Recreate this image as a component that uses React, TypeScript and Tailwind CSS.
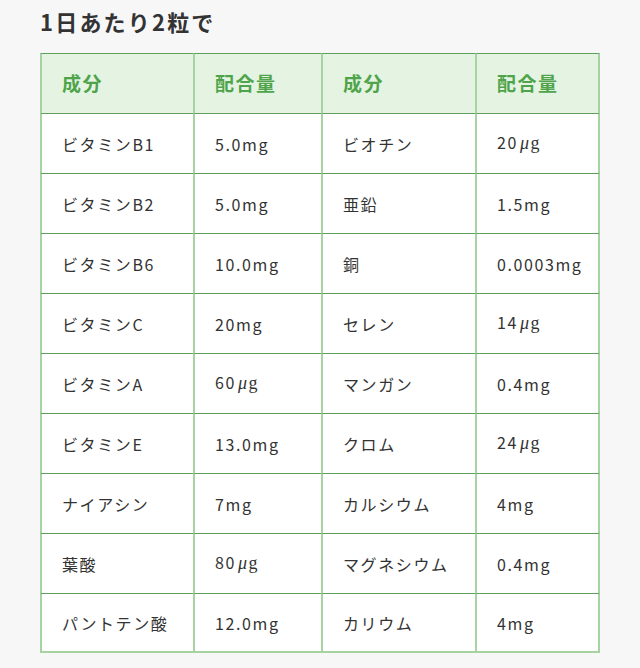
const rows: [string, string, string, string][] = [
  ['ビタミンB1', '5.0mg', 'ビオチン', '20μg'],
  ['ビタミンB2', '5.0mg', '亜鉛', '1.5mg'],
  ['ビタミンB6', '10.0mg', '銅', '0.0003mg'],
  ['ビタミンC', '20mg', 'セレン', '14μg'],
  ['ビタミンA', '60μg', 'マンガン', '0.4mg'],
  ['ビタミンE', '13.0mg', 'クロム', '24μg'],
  ['ナイアシン', '7mg', 'カルシウム', '4mg'],
  ['葉酸', '80μg', 'マグネシウム', '0.4mg'],
  ['パントテン酸', '12.0mg', 'カリウム', '4mg'],
];

const headers = ['成分', '配合量', '成分', '配合量'];

// μg is drawn with the slanted μ and serif g seen in the screenshot
function Amount({ value }: { value: string }) {
  if (!value.endsWith('μg')) return <>{value}</>;
  return (
    <>
      {value.slice(0, -2)}
      <span className="ml-[2px] font-['Liberation_Serif',serif] text-[18px] tracking-[0.08em]">
        <i>μ</i>g
      </span>
    </>
  );
}

export default function App() {
  return (
    <div
      className="min-h-[668px] w-[640px] bg-[#f7f7f7] px-10 pt-[5px] text-[#333]"
      style={{ fontFamily: '"Noto Sans CJK JP", "Noto Sans", sans-serif' }}
    >
      <h2 className="h-[48px] text-[22px] font-bold leading-[32px] tracking-[0.1em]">
        1日あたり2粒で
      </h2>

      <table className="w-[560px] table-fixed border-separate border-spacing-0 bg-white text-[16px] tracking-[0.1em]">
        <colgroup>
          <col className="w-[153px]" />
          <col className="w-[128px]" />
          <col className="w-[154px]" />
          <col className="w-[125px]" />
        </colgroup>
        <thead>
          <tr>
            {headers.map((h, i) => (
              <th
                key={i}
                className={
                  'h-[60px] border-t border-l-2 border-t-[#5f9e5b] border-l-[#a6d3a1] bg-[#e5f4e2] pl-[20px] text-left text-[19px] font-bold tracking-[0.08em] text-[#4fa44b]' +
                  (i === 3 ? ' border-r-2 border-r-[#a6d3a1]' : '')
                }
              >
                {h}
              </th>
            ))}
          </tr>
        </thead>
        <tbody>
          {rows.map((r, ri) => (
            <tr key={ri}>
              {r.map((c, ci) => (
                <td
                  key={ci}
                  className={
                    'h-[60px] border-t border-l-2 border-t-[#5f9e5b] border-l-[#a6d3a1] pl-[20px] align-middle' +
                    (ci === 3 ? ' border-r-2 border-r-[#a6d3a1]' : '') +
                    (ri === rows.length - 1 ? ' border-b-2 border-b-[#a6d3a1]' : '')
                  }
                >
                  <Amount value={c} />
                </td>
              ))}
            </tr>
          ))}
        </tbody>
      </table>
    </div>
  );
}
